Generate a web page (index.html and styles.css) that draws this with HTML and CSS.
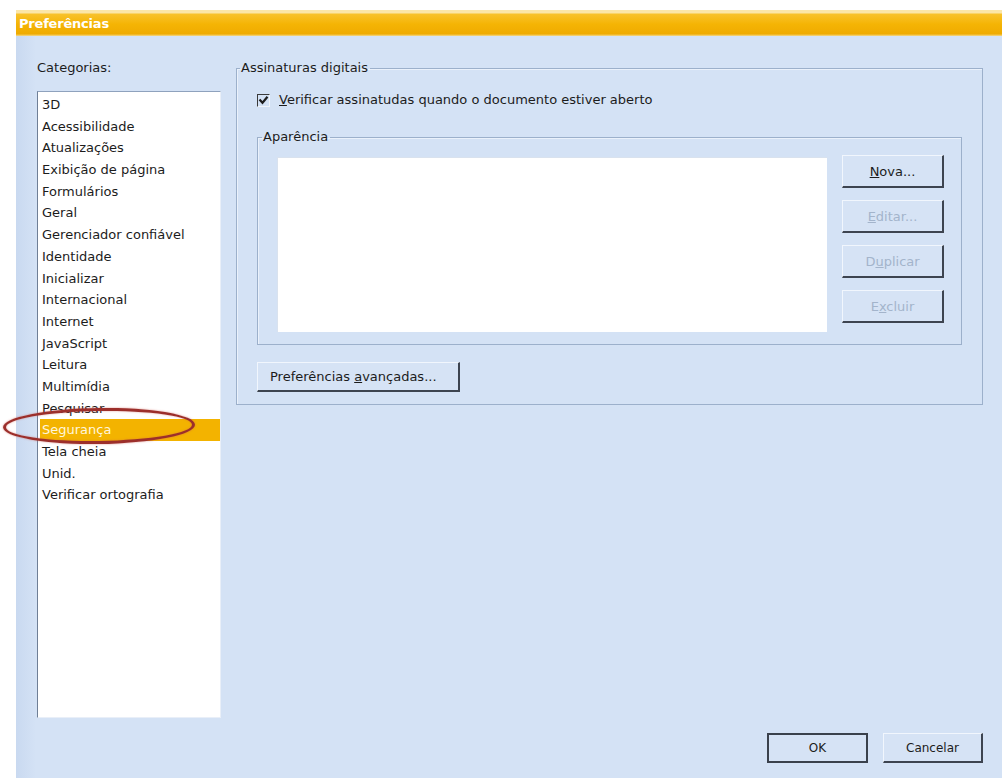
FILE: index.html
```html
<!DOCTYPE html>
<html lang="pt-BR">
<head>
<meta charset="utf-8">
<title>Preferências</title>
<link rel="stylesheet" href="styles.css">
</head>
<body>
<div class="window">
  <div class="titlebar">Preferências</div>
  <div class="content">
    <div class="sidebar">
      <div class="label">Categorias:</div>
      <ul class="listbox">
        <li>3D</li>
        <li>Acessibilidade</li>
        <li>Atualizações</li>
        <li>Exibição de página</li>
        <li>Formulários</li>
        <li>Geral</li>
        <li>Gerenciador confiável</li>
        <li>Identidade</li>
        <li>Inicializar</li>
        <li>Internacional</li>
        <li>Internet</li>
        <li>JavaScript</li>
        <li>Leitura</li>
        <li>Multimídia</li>
        <li>Pesquisar</li>
        <li class="selected">Segurança</li>
        <li>Tela cheia</li>
        <li>Unid.</li>
        <li>Verificar ortografia</li>
      </ul>
    </div>
    <div class="main">
      <fieldset class="group">
        <legend>Assinaturas digitais</legend>
        <label class="check">
          <span class="checkbox">
            <svg width="11" height="11" viewBox="0 0 11 11"><path d="M1.5 4.5 L4.5 7.8 L9.5 1.8" fill="none" stroke="#1e1e1e" stroke-width="2.2"/></svg>
          </span>
          <span><u>V</u>erificar assinatudas quando o documento estiver aberto</span>
        </label>
        <fieldset class="group inner">
          <legend>Aparência</legend>
          <div class="appearance">
            <div class="preview"></div>
            <div class="side-buttons">
              <button class="btn"><u>N</u>ova...</button>
              <button class="btn disabled"><u>E</u>ditar...</button>
              <button class="btn disabled">D<u>u</u>plicar</button>
              <button class="btn disabled">E<u>x</u>cluir</button>
            </div>
          </div>
        </fieldset>
        <button class="btn advanced">Preferências <u>a</u>vançadas...</button>
      </fieldset>
    </div>
  </div>
  <div class="footer">
    <button class="btn default">OK</button>
    <button class="btn cancel">Cancelar</button>
  </div>
</div>
<div class="highlight-ring"></div>
</body>
</html>
```

FILE: styles.css
```css
html, body {
  margin: 0;
  padding: 0;
  background: #ffffff;
}

body {
  font-family: "DejaVu Sans", "Liberation Sans", sans-serif;
  font-size: 13px;
  color: #1c1c1c;
  position: relative;
  width: 1002px;
  height: 781px;
  overflow: hidden;
}

.window {
  margin: 10px 0 0 16px;
  width: 986px;
  height: 768px;
  background: linear-gradient(to right, #c9d9f0 0, #d4e2f5 20px);
  display: flex;
  flex-direction: column;
}

.titlebar {
  height: 26px;
  line-height: 26px;
  padding: 1px 0 0 3px;
  box-sizing: border-box;
  color: #ffffff;
  font-weight: bold;
  font-size: 13px;
  letter-spacing: -0.2px;
  background: linear-gradient(to bottom, #fbe6a8 0, #fbe6a8 3px, #f8c22c 4px, #f5b404 55%, #efab00 92%, #f5d98a 100%);
}

.content {
  flex: 1;
  display: flex;
  padding: 24px 19px 0 21px;
}

.sidebar {
  width: 185px;
  display: flex;
  flex-direction: column;
}

.label {
  line-height: 16px;
  height: 16px;
  margin-bottom: 15px;
}

.listbox {
  list-style: none;
  margin: 0;
  padding: 2px 0 0 0;
  height: 627px;
  box-sizing: border-box;
  background: #ffffff;
  border-top: 1px solid #8fa2bd;
  border-left: 1px solid #6f7f96;
  border-right: 1px solid #e9eff8;
  border-bottom: 1px solid #e9eff8;
}

.listbox li {
  height: 21.7px;
  line-height: 21.7px;
  padding-left: 4px;
  white-space: nowrap;
}

.listbox li.selected {
  margin-left: 2px;
  padding-left: 2px;
  background: #f3b300;
  color: #fff6dc;
}

.main {
  flex: 1;
  margin-left: 15px;
}

.group {
  margin: 1px 0 0 0;
  padding: 17px 20px 12px 20px;
  border: 1px solid #9cb0cb;
  box-shadow: inset 1px 1px 0 #eaf1fb;
  min-width: 0;
}

.group legend {
  line-height: 14px;
  padding: 0 2px 0 1px;
  margin-left: -17px;
}

.check {
  display: flex;
  align-items: center;
  height: 16px;
  line-height: 16px;
}

.checkbox {
  width: 13px;
  height: 13px;
  box-sizing: border-box;
  border-top: 1px solid #3a3a3a;
  border-left: 1px solid #3a3a3a;
  border-right: 1px solid #f2f6fc;
  border-bottom: 1px solid #f2f6fc;
  margin-right: 9px;
  display: flex;
  align-items: center;
  justify-content: center;
}

.checkbox svg {
  display: block;
}

.inner {
  margin: 22px 0 0 0;
  padding: 13px 17px 12px 19px;
}

.inner legend {
  margin-left: -15px;
}

.appearance {
  display: flex;
  align-items: flex-start;
}

.preview {
  width: 550px;
  height: 175px;
  background: #ffffff;
  box-shadow: inset 1px 1px 0 #d9e2ee;
}

.side-buttons {
  margin-left: 15px;
  margin-top: -2px;
  display: flex;
  flex-direction: column;
  gap: 12px;
}

.btn {
  font-family: "DejaVu Sans", "Liberation Sans", sans-serif;
  font-size: 13px;
  color: #1c1c1c;
  background: #d6e3f5;
  border-style: solid;
  border-width: 1px 2px 2px 1px;
  border-color: #f1f6fd #3d4450 #3d4450 #f1f6fd;
  padding: 0;
  margin: 0;
  box-sizing: border-box;
}

.side-buttons .btn {
  width: 102px;
  height: 33px;
}

.btn.disabled {
  color: #a3b4cb;
}

.advanced {
  margin-top: 17px;
  width: 203px;
  height: 30px;
  text-align: left;
  padding-left: 12px;
}

.footer {
  display: flex;
  justify-content: flex-end;
  gap: 15px;
  padding: 0 19px 15px 0;
}

.footer .btn {
  height: 30px;
  font-size: 12px;
}

.default {
  width: 101px;
  border: 2px solid #3a414c;
}

.cancel {
  width: 100px;
}

.highlight-ring {
  position: absolute;
  left: 3px;
  top: 408px;
  width: 192px;
  height: 36px;
  box-sizing: border-box;
  border: 3px solid #9c2f2b;
  border-radius: 50%;
  box-shadow: 0 0 2px rgba(210, 90, 80, 0.7), inset 0 0 2px rgba(210, 90, 80, 0.6);
  transform: rotate(-0.8deg);
}
```
